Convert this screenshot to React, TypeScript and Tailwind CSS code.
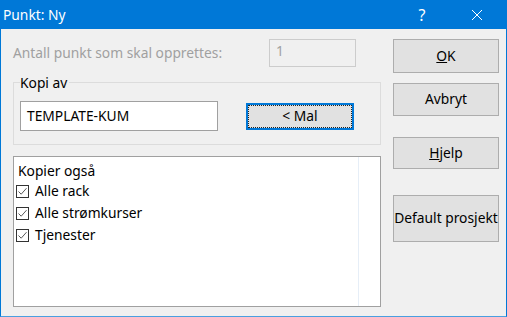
import React from "react";

const font = { fontFamily: '"Noto Sans", "Open Sans", sans-serif' };

function Check({ label }: { label: string }) {
  return (
    <div className="flex items-center h-[22px] gap-[6px] pl-[2px]">
      <div className="w-[13px] h-[13px] border border-[#333333] bg-white flex items-center justify-center">
        <svg width="11" height="11" viewBox="0 0 11 11">
          <path d="M1.5 5.5 L4.2 8.2 L9.5 2.2" fill="none" stroke="#5a5a5a" strokeWidth="1" />
        </svg>
      </div>
      <span>{label}</span>
    </div>
  );
}

function WinButton({ children, focused, className }: { children: React.ReactNode; focused?: boolean; className?: string }) {
  return (
    <div
      className={
        "flex items-center justify-center bg-[#e1e1e1] text-black " +
        (focused ? "border-2 border-[#0078d7] " : "border border-[#adadad] ") +
        (className ?? "")
      }
    >
      {focused ? (
        <div className="w-full h-full border border-dotted border-[#222] flex items-center justify-center">{children}</div>
      ) : (
        children
      )}
    </div>
  );
}

export default function App() {
  return (
    <div className="w-[507px] h-[317px] bg-[#f0f0f0] border border-[#0078d7] border-b-[#4a9fe0] flex flex-col text-[13.8px] text-black" style={font}>
      {/* title bar */}
      <div className="h-[28px] bg-[#0078d7] flex items-center text-white">
        <span className="pl-[2px] text-[13.8px] flex-1">Punkt: Ny</span>
        <span className="w-[46px] text-center text-[16px] mr-[9px]">?</span>
        <div className="w-[46px] flex justify-center mr-[6px]">
          <svg width="12" height="12" viewBox="0 0 12 12">
            <path d="M1 1 L11 11 M11 1 L1 11" stroke="white" strokeWidth="1" />
          </svg>
        </div>
      </div>

      <div className="flex flex-1">
        {/* left column */}
        <div className="w-[368px] ml-[12px] flex flex-col">
          <div className="flex items-center mt-[10px] h-[28px]">
            <span className="w-[256px] text-[#a0a0a0]">Antall punkt som skal opprettes:</span>
            <div className="w-[87px] h-[28px] border border-[#cccccc] px-[6px] pt-[1px] text-[#a0a0a0]">1</div>
          </div>

          <div className="relative mt-[15px] h-[63px] border border-[#dcdcdc] flex items-center">
            <span className="absolute left-[6px] top-[-8px] bg-[#f0f0f0] pr-[2px] leading-[15px]">Kopi av</span>
            <div className="ml-[6px] mt-[5px] w-[198px] h-[30px] bg-white border border-[#a0a0a0] flex items-center px-[6px]">
              TEMPLATE-KUM
            </div>
            <WinButton focused className="ml-[28px] mt-[5px] w-[108px] h-[27px]">&lt; Mal</WinButton>
          </div>

          <div className="mt-[11px] h-[151px] bg-white border border-[#a0a0a0] flex">
            <div className="flex-1 flex flex-col pt-[4px]">
              <span className="pl-[4px] h-[19px] leading-[19px]">Kopier også</span>
              <Check label="Alle rack" />
              <Check label="Alle strømkurser" />
              <Check label="Tjenester" />
            </div>
            <div className="w-[22px] border-l border-[#e6eef7]" />
          </div>
        </div>

        {/* right column */}
        <div className="ml-[12px] w-[106px] flex flex-col">
          <WinButton className="mt-[10px] h-[34px]">
            <span><span className="underline">O</span>K</span>
          </WinButton>
          <WinButton className="mt-[10px] h-[33px]">Avbryt</WinButton>
          <WinButton className="mt-[21px] h-[32px]">
            <span><span className="underline">H</span>jelp</span>
          </WinButton>
          <WinButton className="mt-[26px] h-[47px] whitespace-nowrap">Default prosjekt</WinButton>
        </div>
      </div>
    </div>
  );
}
